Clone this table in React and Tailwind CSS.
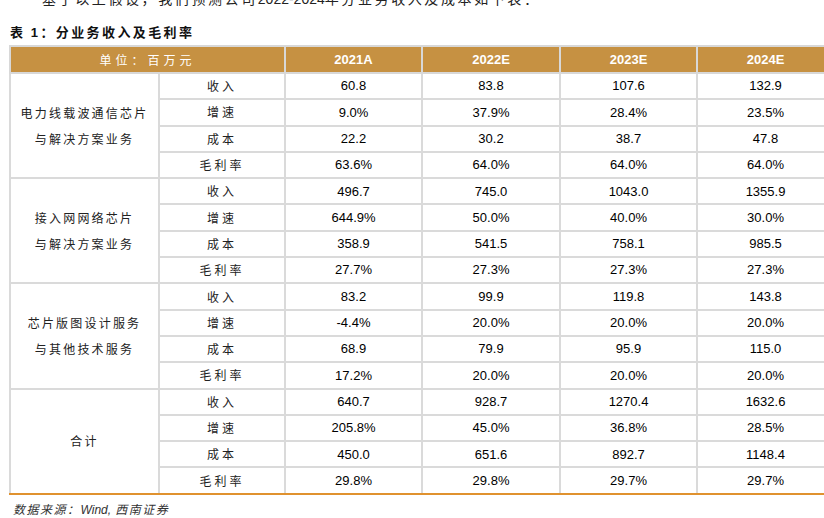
import React from "react";

const groups = [
  {
    label: ["电力线载波通信芯片", "与解决方案业务"],
    rows: [
      ["收入", "60.8", "83.8", "107.6", "132.9"],
      ["增速", "9.0%", "37.9%", "28.4%", "23.5%"],
      ["成本", "22.2", "30.2", "38.7", "47.8"],
      ["毛利率", "63.6%", "64.0%", "64.0%", "64.0%"],
    ],
  },
  {
    label: ["接入网网络芯片", "与解决方案业务"],
    rows: [
      ["收入", "496.7", "745.0", "1043.0", "1355.9"],
      ["增速", "644.9%", "50.0%", "40.0%", "30.0%"],
      ["成本", "358.9", "541.5", "758.1", "985.5"],
      ["毛利率", "27.7%", "27.3%", "27.3%", "27.3%"],
    ],
  },
  {
    label: ["芯片版图设计服务", "与其他技术服务"],
    rows: [
      ["收入", "83.2", "99.9", "119.8", "143.8"],
      ["增速", "-4.4%", "20.0%", "20.0%", "20.0%"],
      ["成本", "68.9", "79.9", "95.9", "115.0"],
      ["毛利率", "17.2%", "20.0%", "20.0%", "20.0%"],
    ],
  },
  {
    label: ["合计"],
    rows: [
      ["收入", "640.7", "928.7", "1270.4", "1632.6"],
      ["增速", "205.8%", "45.0%", "36.8%", "28.5%"],
      ["成本", "450.0", "651.6", "892.7", "1148.4"],
      ["毛利率", "29.8%", "29.8%", "29.7%", "29.7%"],
    ],
  },
];

const cjk = "font-['Noto_Sans_CJK_SC',sans-serif]";
const num = "font-['Liberation_Sans',Arial,sans-serif]";

export default function App() {
  return (
    <div className="w-[824px] h-[518px] overflow-hidden bg-white text-black">
      <div
        className={`-mt-[10px] h-[16px] leading-[16px] pl-[42px] text-[14px] tracking-[2.6px] text-[#222] whitespace-nowrap ${cjk}`}
      >
        基于以上假设，我们预测公司<span className={`${num} tracking-normal`}>2022-2024</span>年分业务收入及成本如下表：
      </div>
      <div
        className={`mt-[16px] ml-[10px] h-[20px] leading-[20px] text-[13px] font-bold tracking-[2.4px] text-[#111] ${cjk}`}
      >
        表 <span className={`${num}`}>1</span>：分业务收入及毛利率
      </div>
      <table className="mt-[3px] ml-[9px] table-fixed border-collapse w-[824px]">
        <colgroup>
          <col className="w-[149px]" />
          <col className="w-[126px]" />
          <col className="w-[137px]" />
          <col className="w-[138px]" />
          <col className="w-[137px]" />
          <col className="w-[137px]" />
        </colgroup>
        <thead>
          <tr className="h-[27px] bg-[#c69142]">
            <th
              colSpan={2}
              className={`border-2 border-[#d8d8d8] p-0 text-[12px] font-normal text-white tracking-[4px] ${cjk}`}
            >
              单位：百万元
            </th>
            {["2021A", "2022E", "2023E", "2024E"].map((y) => (
              <th
                key={y}
                className={`border-2 border-[#d8d8d8] p-0 text-[13px] font-bold text-white ${num}`}
              >
                {y}
              </th>
            ))}
          </tr>
        </thead>
        <tbody>
          {groups.map((g, gi) => {
            const last = gi === groups.length - 1;
            return g.rows.map((r, ri) => {
              const bottom = last && ri === 3;
              const bcls = bottom
                ? "border-2 border-[#dadada] border-b-[#e0922f]"
                : "border-2 border-[#dadada]";
              return (
                <tr key={`${gi}-${ri}`} className="h-[26.3px]">
                  {ri === 0 && (
                    <td
                      rowSpan={4}
                      className={`${last ? "border-2 border-[#dadada] border-b-[#e0922f]" : "border-2 border-[#dadada]"} p-0 text-center align-middle text-[12px] leading-[26px] tracking-[2.2px] text-[#222] ${cjk}`}
                    >
                      {g.label.map((l) => (
                        <div key={l}>{l}</div>
                      ))}
                    </td>
                  )}
                  <td
                    className={`${bcls} p-0 text-center text-[12px] tracking-[3px] text-[#222] ${cjk}`}
                  >
                    {r[0]}
                  </td>
                  {r.slice(1).map((v, vi) => (
                    <td
                      key={vi}
                      className={`${bcls} p-0 text-center text-[13px] text-black ${num}`}
                    >
                      {v}
                    </td>
                  ))}
                </tr>
              );
            });
          })}
        </tbody>
      </table>
      <div
        className={`mt-[5px] ml-[13px] text-[12px] italic tracking-[1.5px] text-[#333] ${cjk}`}
      >
        数据来源：<span className={`${num} tracking-normal`}>Wind,</span> 西南证券
      </div>
    </div>
  );
}
